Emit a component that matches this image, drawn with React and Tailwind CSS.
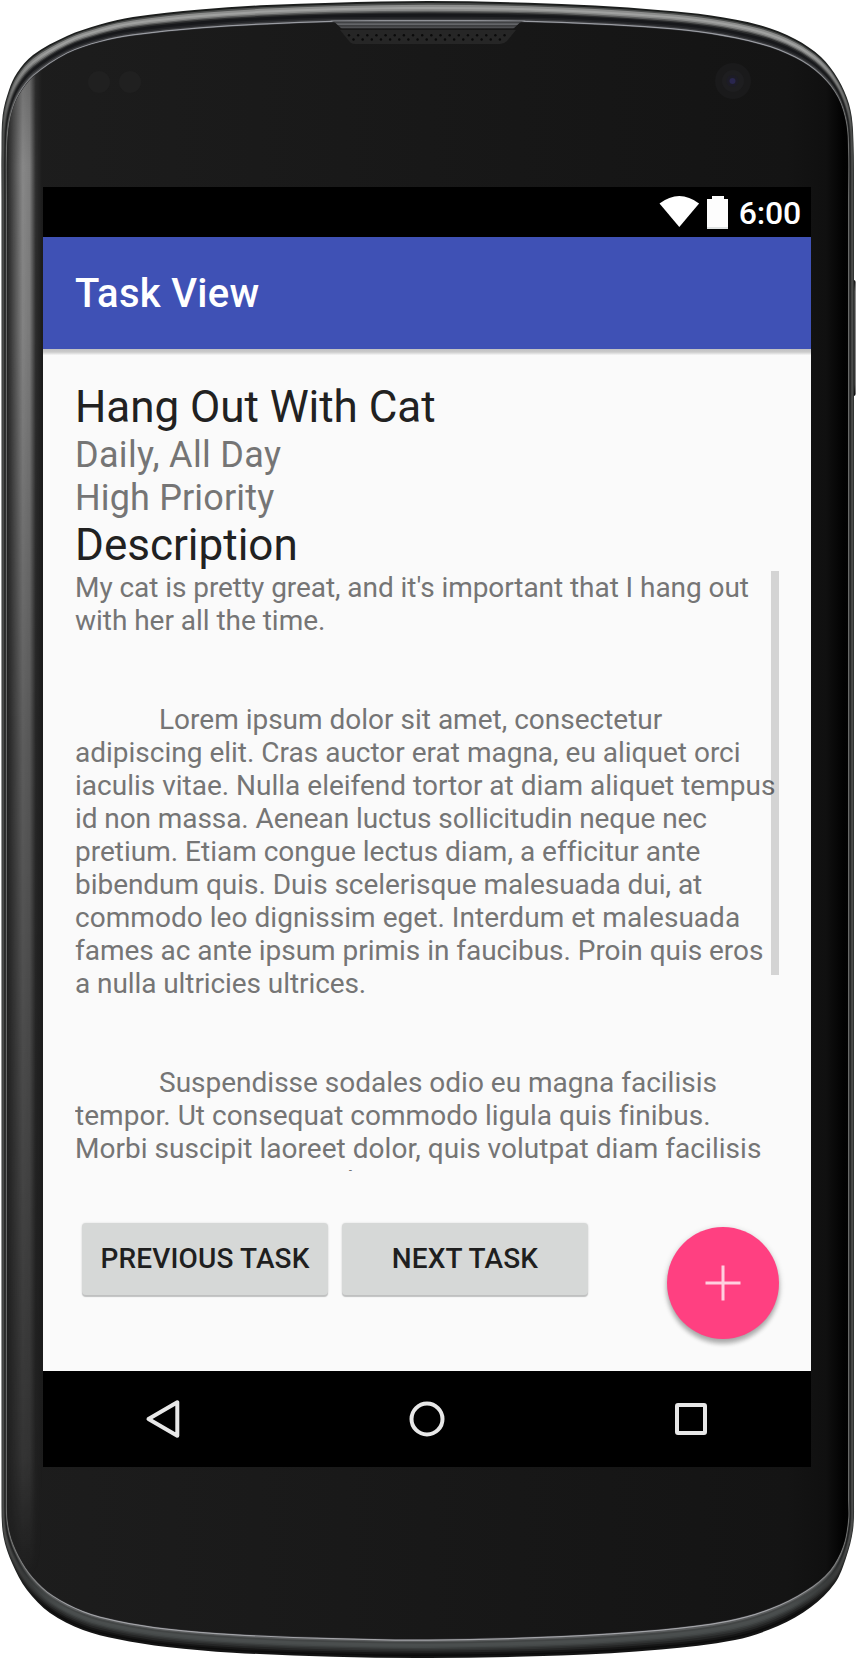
import React from "react";

const INDENT = "pl-[84px]";

const lines = [
  { text: "My cat is pretty great, and it's important that I hang out", cls: "tracking-[-0.06px]" },
  { text: "with her all the time.", cls: "tracking-[-0.03px]" },
  { text: "" },
  { text: "" },
  { text: "Lorem ipsum dolor sit amet, consectetur", cls: INDENT },
  { text: "adipiscing elit. Cras auctor erat magna, eu aliquet orci" },
  { text: "iaculis vitae. Nulla eleifend tortor at diam aliquet tempus" },
  { text: "id non massa. Aenean luctus sollicitudin neque nec", cls: "tracking-[-0.08px]" },
  { text: "pretium. Etiam congue lectus diam, a efficitur ante" },
  { text: "bibendum quis. Duis scelerisque malesuada dui, at", cls: "tracking-[-0.04px]" },
  { text: "commodo leo dignissim eget. Interdum et malesuada", cls: "tracking-[0.04px]" },
  { text: "fames ac ante ipsum primis in faucibus. Proin quis eros", cls: "tracking-[-0.03px]" },
  { text: "a nulla ultricies ultrices.", cls: "tracking-[-0.08px]" },
  { text: "" },
  { text: "" },
  { text: "Suspendisse sodales odio eu magna facilisis", cls: INDENT },
  { text: "tempor. Ut consequat commodo ligula quis finibus.", cls: "tracking-[0.03px]" },
  { text: "Morbi suscipit laoreet dolor, quis volutpat diam facilisis", cls: "tracking-[0.04px]" },
  { text: "et nunc magna purus leo, eu varius", cls: "tracking-[0.12px]" },
];

// Contours of the handset: the outer case and the edge of the glass, point for point.
const OUTER = [
  [1.5, 200], [1.5, 150], [2.7, 115], [9, 90], [17, 73], [33, 55], [67, 36], [100, 24.5], [133, 17], [200, 9.5], [267, 5], [333, 2.7], [428, 1],
  [528, 2.7], [595, 5.6], [661, 10.2], [711, 15.5], [761, 25.5], [795, 39], [821, 57], [838, 79], [849, 104], [853, 130], [854, 200],
  [854, 1500], [853, 1530], [846, 1558], [835, 1583], [811, 1607], [778, 1626], [735, 1640], [661, 1649.5], [561, 1655.5],
  [428, 1658], [333, 1656.7], [233, 1652.7], [167, 1647], [117, 1639], [83, 1630], [50, 1613], [27, 1590], [12, 1563], [3.5, 1537], [1.5, 1507],
];
const INNER = [
  [7, 200], [7, 155], [8.5, 130], [12, 112], [19, 95], [33, 77], [67, 54], [100, 42.5], [133, 36], [200, 29], [267, 25], [333, 22.5], [428, 22],
  [528, 22.5], [595, 25], [661, 29], [711, 34.5], [761, 45], [795, 58], [821, 76], [838, 98], [846, 123], [848, 150], [848, 200],
  [848, 1500], [848, 1520], [843, 1546], [830, 1570], [806, 1590], [770, 1608], [728, 1620], [661, 1629], [561, 1635.5],
  [428, 1639], [333, 1637.5], [233, 1633.5], [167, 1628], [117, 1620], [83, 1610.5], [53, 1595], [33, 1577], [19, 1556], [10, 1533], [7, 1507],
];

const contour = (t) => OUTER.map(([x, y], i) => [x + (INNER[i][0] - x) * t, y + (INNER[i][1] - y) * t]);

function smooth(pts) {
  const n = pts.length;
  const f = (v) => v.toFixed(2);
  let d = `M${f(pts[0][0])} ${f(pts[0][1])}`;
  for (let i = 0; i < n; i++) {
    const p0 = pts[(i - 1 + n) % n];
    const p1 = pts[i];
    const p2 = pts[(i + 1) % n];
    const p3 = pts[(i + 2) % n];
    const long = Math.abs(p2[1] - p1[1]) > 400;
    const len = Math.hypot(p2[0] - p1[0], p2[1] - p1[1]);
    const a = Math.hypot(p2[0] - p0[0], p2[1] - p0[1]) || 1;
    const b = Math.hypot(p3[0] - p1[0], p3[1] - p1[1]) || 1;
    if (long) {
      d += `L${f(p2[0])} ${f(p2[1])}`;
    } else {
      const k = len / 3;
      d += `C${f(p1[0] + ((p2[0] - p0[0]) / a) * k)} ${f(p1[1] + ((p2[1] - p0[1]) / a) * k)} ${f(p2[0] - ((p3[0] - p1[0]) / b) * k)} ${f(p2[1] - ((p3[1] - p1[1]) / b) * k)} ${f(p2[0])} ${f(p2[1])}`;
    }
  }
  return d + "Z";
}

// depth, colour at the top, on the sides and at the bottom
const BANDS = [
  [0, "#1c1e1d", "#2a2c2b", "#141414"],
  [0.1, "#4c4e4d", "#3c3e3d", "#0c0c0c"],
  [0.18, "#8b8c8b", "#4a4b4a", "#161616"],
  [0.28, "#a0a1a0", "#4d4e4d", "#242525"],
  [0.38, "#8a8b8a", "#444544", "#303232"],
  [0.46, "#5c5d5d", "#353636", "#3a3d3d"],
  [0.53, "#2c2d2e", "#2a2b2b", "#454949"],
  [0.6, "#17181b", "#1d1e1e", "#4a4e4e"],
  [0.75, "#222326", "#4c4d4d", "#424545"],
  [0.84, "#3a3b3e", "#727372", "#5a5c5d"],
  [0.91, "#9a9ca2", "#767776", "#a2a3a7"],
  [0.97, "#303134", "#303030", "#303033"],
];

function Bezel() {
  const glass = smooth(INNER);
  const dots = [];
  for (let i = 0; i < 18; i++) {
    dots.push([349 + i * 9.15, 35.3]);
    if (i < 17) dots.push([353.5 + i * 9.15, 39.5]);
  }
  return (
    <svg className="absolute inset-0" width="856" height="1659" viewBox="0 0 856 1659">
      <defs>
        {BANDS.map(([t, top, side, bottom], i) => (
          <linearGradient key={i} id={`band${i}`} gradientUnits="userSpaceOnUse" x1="0" y1="0" x2="0" y2="1659">
            <stop offset="0" stopColor={top} />
            <stop offset="0.03" stopColor={top} />
            <stop offset="0.08" stopColor={side} />
            <stop offset="0.93" stopColor={side} />
            <stop offset="0.97" stopColor={bottom} />
            <stop offset="1" stopColor={bottom} />
          </linearGradient>
        ))}
        <linearGradient id="glass" gradientUnits="userSpaceOnUse" x1="0" y1="0" x2="856" y2="0">
          <stop offset="0" stopColor="#1d1d1d" />
          <stop offset="0.5" stopColor="#181818" />
          <stop offset="0.92" stopColor="#141414" />
          <stop offset="0.965" stopColor="#101010" />
          <stop offset="0.985" stopColor="#020202" />
          <stop offset="1" stopColor="#000000" />
        </linearGradient>
        <linearGradient id="shine" gradientUnits="userSpaceOnUse" x1="7" y1="0" x2="42" y2="0">
          <stop offset="0" stopColor="#8e8e8e" stopOpacity="0.05" />
          <stop offset="0.2" stopColor="#8e8e8e" stopOpacity="0.45" />
          <stop offset="0.45" stopColor="#8e8e8e" stopOpacity="0.95" />
          <stop offset="0.65" stopColor="#8e8e8e" stopOpacity="0.85" />
          <stop offset="0.82" stopColor="#8e8e8e" stopOpacity="0.15" />
          <stop offset="1" stopColor="#8e8e8e" stopOpacity="0" />
        </linearGradient>
        <linearGradient id="fade" gradientUnits="userSpaceOnUse" x1="0" y1="0" x2="0" y2="1659">
          <stop offset="0.05" stopColor="#fff" stopOpacity="0.8" />
          <stop offset="0.1" stopColor="#fff" />
          <stop offset="0.2" stopColor="#fff" stopOpacity="0.95" />
          <stop offset="0.45" stopColor="#fff" stopOpacity="0.6" />
          <stop offset="0.7" stopColor="#fff" stopOpacity="0.38" />
          <stop offset="0.88" stopColor="#fff" stopOpacity="0.22" />
          <stop offset="0.95" stopColor="#fff" stopOpacity="0" />
        </linearGradient>
        <mask id="fadeMask">
          <rect width="60" height="1659" fill="url(#fade)" />
        </mask>
        <clipPath id="glassClip">
          <path d={glass} />
        </clipPath>
        <linearGradient id="lip" x1="0" y1="0" x2="0" y2="1">
          <stop offset="0" stopColor="#85878c" />
          <stop offset="0.2" stopColor="#3a3b3d" />
          <stop offset="0.45" stopColor="#6a6c70" />
          <stop offset="0.6" stopColor="#38393b" />
          <stop offset="0.85" stopColor="#505154" />
          <stop offset="1" stopColor="#0a0a0a" />
        </linearGradient>
        <linearGradient id="volume" x1="0" y1="0" x2="0" y2="1">
          <stop offset="0" stopColor="#111" />
          <stop offset="0.1" stopColor="#444" />
          <stop offset="0.9" stopColor="#333" />
          <stop offset="1" stopColor="#0a0a0a" />
        </linearGradient>
      </defs>
      <rect x="851" y="280" width="4.6" height="116" rx="2" fill="url(#volume)" />
      {BANDS.map(([t], i) => (
        <path key={i} d={smooth(contour(t))} fill={`url(#band${i})`} />
      ))}
      <path d={glass} fill="url(#glass)" />
      <g clipPath="url(#glassClip)">
        <rect x="7" y="60" width="36" height="1599" fill="url(#shine)" mask="url(#fadeMask)" />
      </g>
      <path d="M330 20.5 L526 20.5 L520 22.5 L513 29 L342 29 L335 22.5 Z" fill="url(#lip)" />
      <path d="M340 30 L516 30 L507 41 Q504 44 500 44 L355 44 Q351 44 349 41 Z" fill="#262626" />
      {dots.map(([x, y], i) => (
        <circle key={i} cx={x} cy={y} r="1.2" fill="#0a0a0a" />
      ))}
      <circle cx="99" cy="82" r="11" fill="#202020" />
      <circle cx="130" cy="82" r="11" fill="#202020" />
      <circle cx="733" cy="81" r="18" fill="#1a1a1b" />
      <circle cx="733" cy="81" r="11" fill="#1e1e20" />
      <circle cx="732.5" cy="81" r="6" fill="#1d1c26" />
      <circle cx="732.5" cy="81" r="3" fill="#29264e" />
    </svg>
  );
}

function StatusBar() {
  return (
    <div className="flex h-[50px] items-center justify-end bg-black pr-[10px]">
      <svg width="72" height="50" viewBox="656 187 72 50" className="mr-[11px]">
        <path d="M659.5 203.5 Q679.3 188.5 699.1 203.5 L679.3 227 Z" fill="#fff" />
        <path d="M707 199 H712 V196 H724 V199 H729 V229 H707 Z" fill="#fdfdfd" />
        <path d="M707 227 H729 V229 H707 Z" fill="#dfe2e2" />
      </svg>
      <span className="pt-px text-[32px] leading-[38px] font-medium tracking-[-0.2px] text-white">6:00</span>
    </div>
  );
}

function TaskButton({ children }) {
  return (
    <button className="h-[72px] w-[246px] rounded-[4px] bg-[#d6d8d7] text-[28px] leading-[33px] font-medium tracking-[0.15px] text-[#1f1f1f] shadow-[0_2px_1px_#bfc0c0,0_0_2px_#d9d9d9]">
      <span className="relative -top-px">{children}</span>
    </button>
  );
}

function NavBar() {
  return (
    <div className="h-[96px] bg-black">
      <svg width="768" height="96" viewBox="43 1371 768 96" fill="none" stroke="#e8e8e8" strokeWidth="4">
        <path d="M148.5 1419 L177.3 1402.3 V1435.7 Z" strokeLinejoin="round" />
        <circle cx="427" cy="1419" r="15.5" />
        <rect x="677" y="1405" width="28" height="28" rx="1" strokeLinejoin="round" />
      </svg>
    </div>
  );
}

export default function App() {
  return (
    <div className="relative h-[1659px] w-[856px] overflow-hidden bg-white font-[Roboto,sans-serif] [font-variant-ligatures:none]">
      <Bezel />
      <div className="relative pt-[187px] pl-[43px]">
        <div className="flex h-[1280px] w-[768px] flex-col bg-[#fafafa]">
          <StatusBar />
          <div className="flex h-[112px] items-center bg-[#3f51b5] pt-[2px] pl-8 text-[40px] font-medium tracking-[0.3px] text-white">
            Task View
          </div>
          <div className="h-[6px] bg-linear-to-b from-[#c0c0c2] via-[#cbcbcb] to-[#f6f6f6]" />
          <main className="relative flex-1 px-8 pt-[26px] text-[#212121]">
            <h1 className="text-[44px] leading-[53px] tracking-[-0.05px]">Hang Out With Cat</h1>
            <p className="text-[36px] leading-[43px] tracking-[0.32px] text-[#757575]">Daily, All Day</p>
            <p className="text-[36px] leading-[43px] tracking-[0.15px] text-[#757575]">High Priority</p>
            <h2 className="text-[44px] leading-[51px]">Description</h2>
            <div className="relative h-[600px] overflow-hidden text-[28px] leading-[33px] whitespace-pre text-[#757575]">
              {lines.map((l, i) => (
                <div key={i} className={`h-[33px] ${l.cls || ""}`}>
                  {l.text}
                </div>
              ))}
              <div className="absolute top-0 right-0 h-[404px] w-2 bg-black/15" />
            </div>
            <div className="mt-[52px] ml-[7px] flex gap-[14px]">
              <TaskButton>PREVIOUS TASK</TaskButton>
              <TaskButton>NEXT TASK</TaskButton>
            </div>
            <button className="absolute right-[32.5px] bottom-[32.5px] h-[111.5px] w-[111.5px] rounded-full bg-[#ff4081] shadow-[0_5px_4px_rgba(0,0,0,0.2),0_2px_6px_rgba(0,0,0,0.22)]">
              <svg width="111.5" height="111.5" viewBox="0 0 111.5 111.5" stroke="#ffcfdf" strokeWidth="3">
                <path d="M38.5 56 H73.5 M56 38.5 V73.5" />
              </svg>
            </button>
          </main>
          <NavBar />
        </div>
      </div>
    </div>
  );
}
